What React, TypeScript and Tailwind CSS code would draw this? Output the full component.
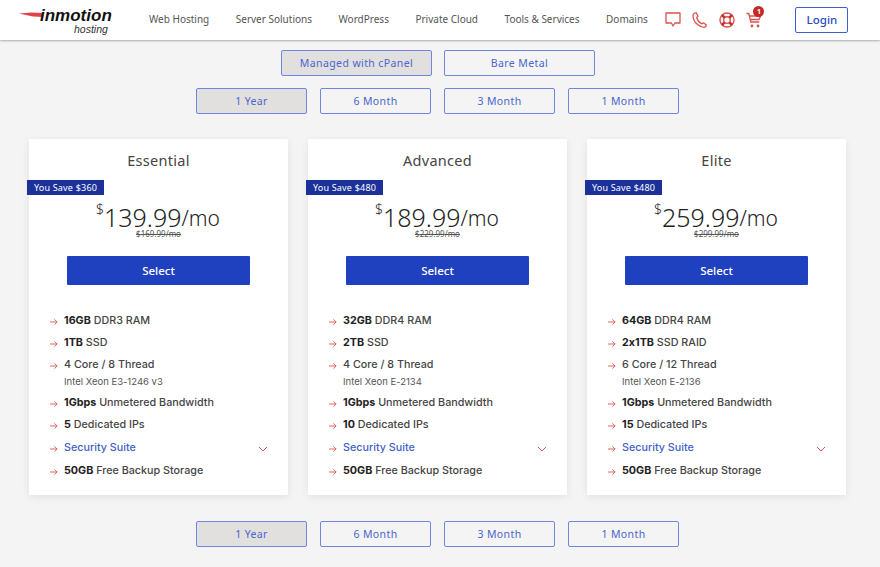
const head = { fontFamily: '"Noto Sans", sans-serif' };

function Logo() {
  return (
    <div className="relative w-[130px] h-[34px] ml-[19px] shrink-0" style={{ fontFamily: '"Liberation Sans", sans-serif' }}>
      <svg className="absolute left-0 top-[9px]" width="24" height="6" viewBox="0 0 24 6">
        <polygon points="0,1.500 12,0.500 24,1 24,5 14,4.500" fill="#d8232a" opacity="0.85" />
      </svg>
      <span className="absolute left-[21px] top-[3px] text-[17px] leading-[20px] font-black italic text-[#111]">inmotion</span>
      <span className="absolute left-[55px] top-[19px] text-[10.500px] leading-[14px] italic text-[#333]">hosting</span>
    </div>
  );
}

function Icons() {
  const s = { fill: 'none', stroke: '#d9534f', strokeWidth: 1.3 };
  return (
    <div className="flex items-center gap-[11px] ml-[17.500px] -mt-[1px]">
      <svg width="16" height="15" viewBox="0 0 16 15" {...s}>
        <path d="M1 1h14v10h-5l-2 3-1.500-3H1z" strokeLinejoin="round" />
      </svg>
      <svg width="16" height="16" viewBox="0 0 16 16" {...s}>
        <path d="M2 1.500l2.200-.8 1.800 3.500-1.300 1.300c.6 2.400 2.600 5 5.200 6.300l1.500-1 3 2.200-.8 1.700c-1 .9-3 .7-5-.4C4.500 12.500 1.500 8.500 1 4.500 .9 3.200 1.200 2.200 2 1.500z" strokeLinejoin="round" />
      </svg>
      <svg width="16" height="16" viewBox="0 0 16 16">
        <circle cx="8" cy="8" r="7" fill="none" stroke="#d9534f" strokeWidth="1.400" />
        <circle cx="8" cy="8" r="3.300" fill="none" stroke="#d9534f" strokeWidth="1.400" />
        <path d="M3 3l2.600 2.600M13 3l-2.600 2.600M3 13l2.600-2.600M13 13l-2.600-2.600" stroke="#c9302c" strokeWidth="2.600" />
      </svg>
      <div className="relative w-[16px] h-[16px]">
        <svg width="16" height="16" viewBox="0 0 16 16" {...s}>
          <path d="M0.500 1.500h2.300l2 8.500h8.500" />
          <path d="M3.500 4h11l-1.500 3.500H4.500" />
          <circle cx="6" cy="14" r="0.800" fill="#d9534f" />
          <circle cx="12" cy="14" r="0.800" fill="#d9534f" />
        </svg>
        <span className="absolute left-[7px] top-[-6px] w-[11px] h-[11px] rounded-full bg-[#c62828] text-white text-[7px] leading-[11px] text-center font-bold">1</span>
      </div>
    </div>
  );
}

function Header() {
  const links = ['Web Hosting', 'Server Solutions', 'WordPress', 'Private Cloud', 'Tools & Services', 'Domains'];
  return (
    <header className="h-[40px] bg-white flex items-center shadow-[0_1px_2px_rgba(0,0,0,0.3)] relative" style={head}>
      <Logo />
      <nav className="flex gap-[26.500px] text-[10px] text-[#555] -mt-[1px]">
        {links.map((l) => <span key={l}>{l}</span>)}
      </nav>
      <Icons />
      <button className="ml-[33px] w-[53px] h-[26px] border border-[#3f5fd0] rounded-[2px] text-[#2b4bc0] text-[11.500px] font-medium">Login</button>
    </header>
  );
}

function Toggle({ label, active, w }: { label: string; active?: boolean; w: string }) {
  return (
    <button className={`${w} border border-[#6f87e0] rounded-[2px] text-[#4a66cf] text-[10.500px] tracking-[0.4px] h-full pt-[1px] ${active ? 'bg-[#e2dfdf]' : ''}`} style={head}>
      {label}
    </button>
  );
}

function Terms({ className }: { className: string }) {
  return (
    <div className={`flex justify-center gap-[13px] h-[26px] pr-[5px] ${className}`}>
      <Toggle label="1 Year" active w="w-[111px]" />
      <Toggle label="6 Month" w="w-[111px]" />
      <Toggle label="3 Month" w="w-[111px]" />
      <Toggle label="1 Month" w="w-[111px]" />
    </div>
  );
}

type Plan = {
  name: string; save: string; price: string; old: string; ram: string; ramType: string;
  disk: string; diskType: string; cores: string; cpu: string; ips: string;
};

const plans: Plan[] = [
  { name: 'Essential', save: '$360', price: '139.99', old: '169.99', ram: '16GB', ramType: 'DDR3 RAM', disk: '1TB', diskType: 'SSD', cores: '4 Core / 8 Thread', cpu: 'Intel Xeon E3-1246 v3', ips: '5' },
  { name: 'Advanced', save: '$480', price: '189.99', old: '229.99', ram: '32GB', ramType: 'DDR4 RAM', disk: '2TB', diskType: 'SSD', cores: '4 Core / 8 Thread', cpu: 'Intel Xeon E-2134', ips: '10' },
  { name: 'Elite', save: '$480', price: '259.99', old: '299.99', ram: '64GB', ramType: 'DDR4 RAM', disk: '2x1TB', diskType: 'SSD RAID', cores: '6 Core / 12 Thread', cpu: 'Intel Xeon E-2136', ips: '15' },
];

function Arrow() {
  return (
    <svg className="shrink-0 mr-[6px] mt-[1px] ml-[1px]" width="8" height="8" viewBox="0 0 9 8" fill="none" stroke="#d9534f" strokeWidth="1">
      <path d="M0 4h8M5 1l3 3-3 3" />
    </svg>
  );
}

function Row({ children, sub, className }: { children: React.ReactNode; sub?: string; className?: string }) {
  return (
    <li className={className}>
      <div className="flex items-center h-[16px]"><Arrow /><span>{children}</span></div>
      {sub && <div className="pl-[15px] text-[9.500px] leading-[14px] text-[#555] font-normal mt-[1.500px] pb-[1px]">{sub}</div>}
    </li>
  );
}

function Card({ p }: { p: Plan }) {
  const strong = 'font-bold text-[#222]';
  return (
    <div className="relative w-[259px] h-[356px] bg-white shadow-[0_2px_8px_rgba(0,0,0,0.08)]">
      <h2 className="text-center text-[14.500px] leading-[20px] pt-[10.500px] text-[#444] tracking-[0.3px]" style={head}>{p.name}</h2>
      <div className="absolute left-[-2px] top-[41px] w-[77px] h-[15px] bg-[#1b3199] text-white text-[9px] leading-[15px] text-center tracking-[0.2px]" style={head}>You Save {p.save}</div>
      <div className="mt-[30.500px] flex justify-center items-start text-[#222] h-[32px] -ml-[1px]" style={head}>
        <span className="text-[14px] leading-[20px] -mt-[1px] font-light">$</span>
        <span className="text-[25px] leading-[34px] font-light">{p.price}</span>
        <span className="text-[21px] leading-[36px] font-light">/mo</span>
      </div>
      <div className="text-center text-[8px] leading-[10px] text-[#555] line-through -mt-[3px]" style={head}>${p.old}/mo</div>
      <div className="flex justify-center mt-[17px]">
        <button className="w-[183px] h-[29px] bg-[#1f41c0] text-white text-[11.500px] font-medium rounded-[1px]" style={head}>Select</button>
      </div>
      <ul className="mt-[28px] px-[20px] flex flex-col gap-[6px] text-[10.750px] font-medium text-[#444] [font-feature-settings:'calt'_0]" style={{ fontFamily: 'Inter, sans-serif' }}>
        <Row><b className={strong}>{p.ram}</b> {p.ramType}</Row>
        <Row><b className={strong}>{p.disk}</b> {p.diskType}</Row>
        <Row sub={p.cpu}>{p.cores}</Row>
        <Row><b className={strong}>1Gbps</b> Unmetered Bandwidth</Row>
        <Row><b className={strong}>{p.ips}</b> Dedicated IPs</Row>
        <li className="flex items-center h-[16px] mt-[1px]">
          <Arrow /><span className="text-[#3f5fc8]">Security Suite</span>
          <svg className="ml-auto" width="10" height="6" viewBox="0 0 10 6" fill="none" stroke="#d9534f" strokeWidth="1"><path d="M1 1l4 4 4-4" /></svg>
        </li>
        <Row className="mt-[1px]"><b className={strong}>50GB</b> Free Backup Storage</Row>
      </ul>
    </div>
  );
}

export default function App() {
  return (
    <div className="w-[880px] h-[567px] overflow-hidden bg-[#f4f4f4]">
      <Header />
      <div className="flex justify-center gap-[12.500px] h-[26px] mt-[10px] pr-[4px]">
        <Toggle label="Managed with cPanel" active w="w-[150.500px]" />
        <Toggle label="Bare Metal" w="w-[150.500px]" />
      </div>
      <Terms className="mt-[12px]" />
      <div className="flex gap-[20px] mt-[25px] ml-[29px]">
        {plans.map((p) => <Card key={p.name} p={p} />)}
      </div>
      <Terms className="mt-[26px]" />
    </div>
  );
}
